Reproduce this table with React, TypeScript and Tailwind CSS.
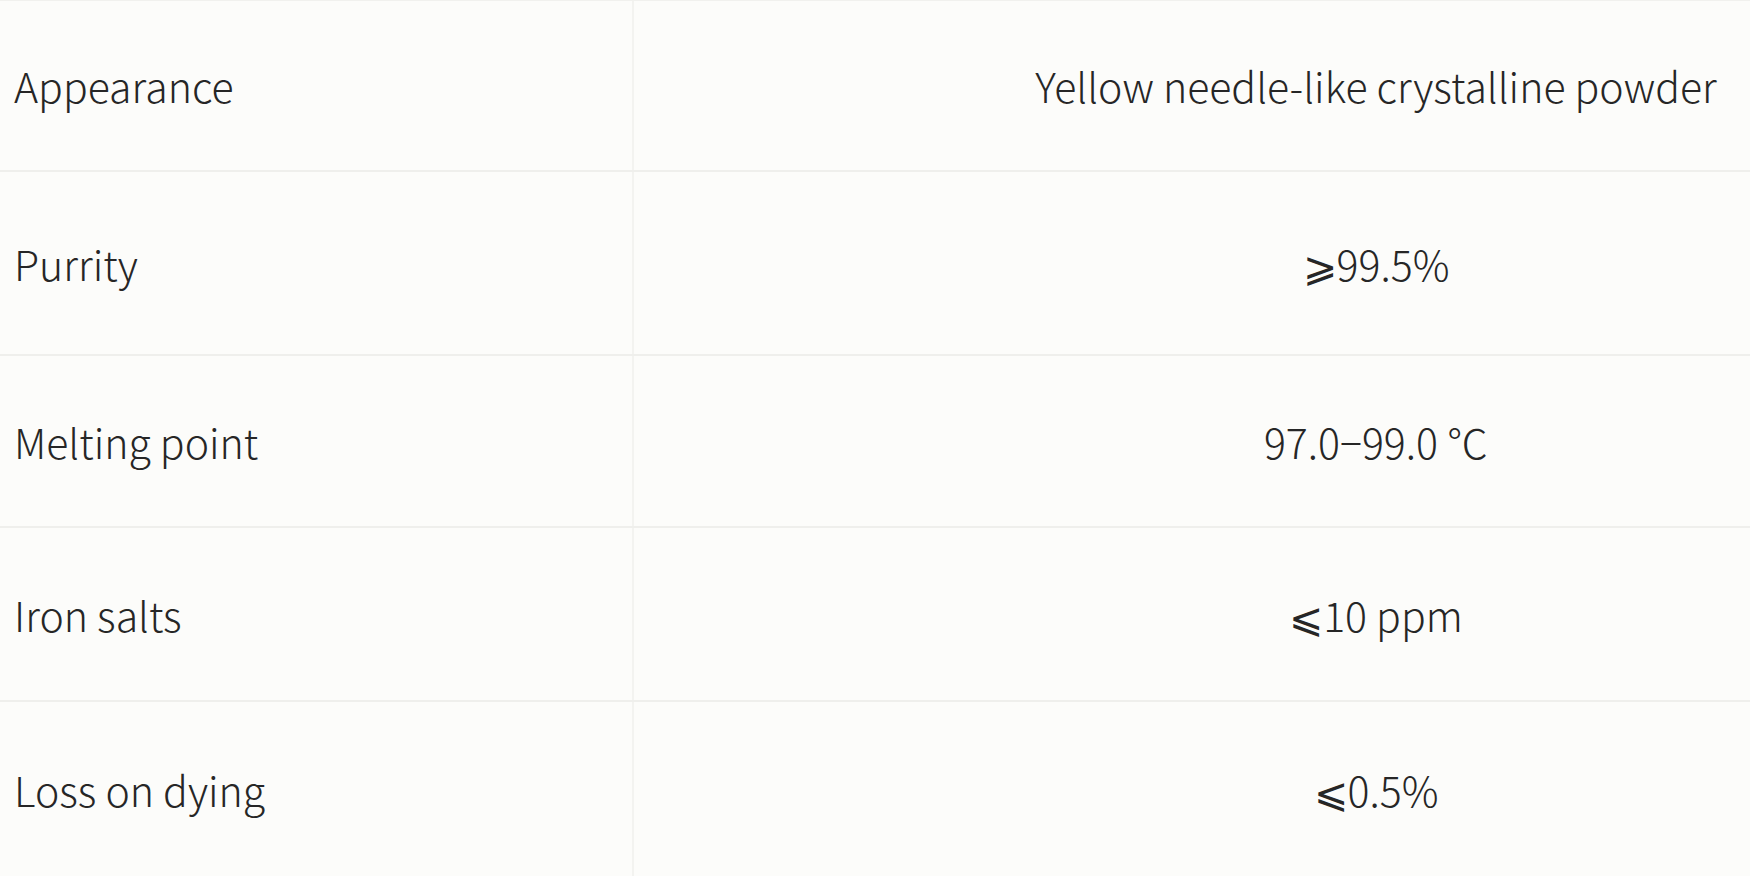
import React from 'react';

type Spec = {
  name: string;
  value: string;
  height: string;
};

const specs: Spec[] = [
  { name: 'Appearance', value: 'Yellow needle-like crystalline powder', height: 'h-[171px]' },
  { name: 'Purrity', value: '⩾99.5%', height: 'h-[184px]' },
  { name: 'Melting point', value: '97.0−99.0 ℃', height: 'h-[172px]' },
  { name: 'Iron salts', value: '⩽10 ppm', height: 'h-[174px]' },
  { name: 'Loss on dying', value: '⩽0.5%', height: 'h-[175px]' },
];

const App: React.FC = () => {
  return (
    <div className="w-full h-[876px] overflow-hidden bg-[#fcfcfa] text-[#262626] font-['Noto_Sans_CJK_SC','DejaVu_Sans',sans-serif] font-light">
      <div className="w-[2118px] border-t border-[#f1f1ee]">
        {specs.map((s, i) => (
          <div
            key={s.name}
            className={`grid grid-cols-[634px_1484px] ${s.height} ${i < specs.length - 1 ? 'border-b-2 border-[#efefec]' : ''}`}
          >
            <div className="flex items-center pl-[14px] pt-[1px] text-[41px] border-r-2 border-[#f3f3f0]">
              {s.name}
            </div>
            <div className="flex items-center justify-center pt-[1px] text-[41px]">
              {s.value}
            </div>
          </div>
        ))}
      </div>
    </div>
  );
};

export default App;
